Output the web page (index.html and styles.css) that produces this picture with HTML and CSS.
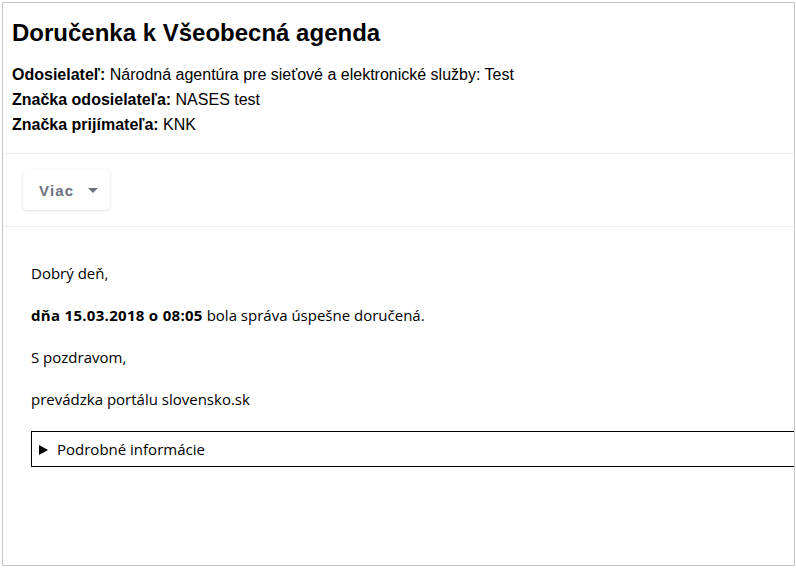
FILE: index.html
```html
<!DOCTYPE html>
<html lang="sk">
<head>
    <meta charset="UTF-8">
    <title>Doručenka</title>
    <link rel="stylesheet" href="styles.css">
</head>
<body>
    <div class="frame">
        <div class="header">
            <h1>Doručenka k Všeobecná agenda</h1>
            <div class="meta"><b>Odosielateľ:</b> Národná agentúra pre sieťové a elektronické služby: Test</div>
            <div class="meta"><b>Značka odosielateľa:</b> NASES test</div>
            <div class="meta"><b>Značka prijímateľa:</b> KNK</div>
        </div>

        <div class="toolbar">
            <button class="more">Viac <span class="caret"></span></button>
        </div>

        <div class="content">
            <p>Dobrý deň,</p>
            <p><b>dňa 15.03.2018 o 08:05</b> bola správa úspešne doručená.</p>
            <p>S pozdravom,</p>
            <p>prevádzka portálu slovensko.sk</p>
            <details class="info">
                <summary>Podrobné informácie</summary>
            </details>
        </div>
    </div>
</body>
</html>
```

FILE: styles.css
```css
html, body {
    margin: 0;
    padding: 0;
    background: #fff;
}
body {
    padding: 2px;
    font-family: "Liberation Sans", Arial, sans-serif;
    color: #000;
}
.frame {
    width: 791px;
    height: 562px;
    border: 1px solid #c8c8c8;
    overflow: hidden;
}
.header {
    padding: 15px 9px 16px;
    border-bottom: 1px solid #eeeeee;
}
h1 {
    margin: 0 0 14px;
    font-size: 24px;
    line-height: 30px;
}
.meta {
    font-size: 16px;
    line-height: 25px;
}
.toolbar {
    padding: 16px 20px;
    border-bottom: 1px solid #eeeeee;
}
.more {
    display: flex;
    align-items: center;
    gap: 14px;
    height: 40px;
    padding: 0 12px 0 16px;
    border: none;
    border-radius: 4px;
    background: #fff;
    box-shadow: 0 1px 3px rgba(0,0,0,0.12), 0 0 1px rgba(0,0,0,0.08);
    font-family: "Liberation Sans", Arial, sans-serif;
    font-size: 15px;
    font-weight: bold;
    letter-spacing: 1.2px;
    color: #6b7280;
}
.caret {
    width: 0;
    height: 0;
    border-left: 5px solid transparent;
    border-right: 5px solid transparent;
    border-top: 5px solid #6b7280;
}
.content {
    padding: 35px 0 0 28px;
    font-family: "Open Sans", "Noto Sans", sans-serif;
    font-size: 15px;
}
.content p {
    margin: 0 0 20px;
    line-height: 22px;
}
.content b {
    letter-spacing: 0.3px;
}
.info {
    width: 780px;
    border: 1px solid #000;
    padding: 7px 6px;
    margin-top: 21px;
}
.info summary {
    list-style: none;
    line-height: 20px;
}
.info summary::-webkit-details-marker {
    display: none;
}
.info summary::before {
    content: "";
    display: inline-block;
    margin: 0 9px 0 1px;
    border-left: 9px solid #000;
    border-top: 5px solid transparent;
    border-bottom: 5px solid transparent;
}
```
